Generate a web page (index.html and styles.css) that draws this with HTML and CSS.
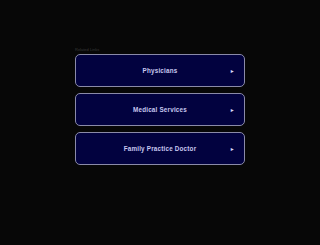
FILE: index.html
```html
<!DOCTYPE html>
<html lang="en">
<head>
  <meta charset="UTF-8" />
  <meta name="viewport" content="width=device-width, initial-scale=1.0" />
  <title>Related Links</title>
  <link rel="stylesheet" href="styles.css">
</head>
<body>
  <div class="container">
    <div class="label">Related Links</div>
    <a class="link" href="#"><span class="text">Physicians</span><span class="arrow">&#9658;</span></a>
    <a class="link" href="#"><span class="text">Medical Services</span><span class="arrow">&#9658;</span></a>
    <a class="link" href="#"><span class="text">Family Practice Doctor</span><span class="arrow">&#9658;</span></a>
  </div>
</body>
</html>
```

FILE: styles.css
```css
body {
  margin: 0;
  background: #070707;
  font-family: 'Liberation Sans', Arial, sans-serif;
  height: 245px;
  overflow: hidden;
}
.container {
  width: 170px;
  margin: 0 auto;
  padding-top: 48px;
  display: flex;
  flex-direction: column;
  gap: 6px;
}
.label {
  font-size: 4px;
  color: #3a3a3a;
  height: 0;
  line-height: 4px;
}
.link {
  position: relative;
  display: flex;
  align-items: center;
  justify-content: center;
  height: 31px;
  background: #02023f;
  border: 1px solid #8a8aa8;
  border-radius: 5px;
  text-decoration: none;
  color: #c8c8f0;
  font-size: 6.3px;
  font-weight: bold;
  letter-spacing: 0.2px;
}
.arrow {
  position: absolute;
  right: 9px;
  font-size: 5px;
  color: #d8d8f8;
}
```
